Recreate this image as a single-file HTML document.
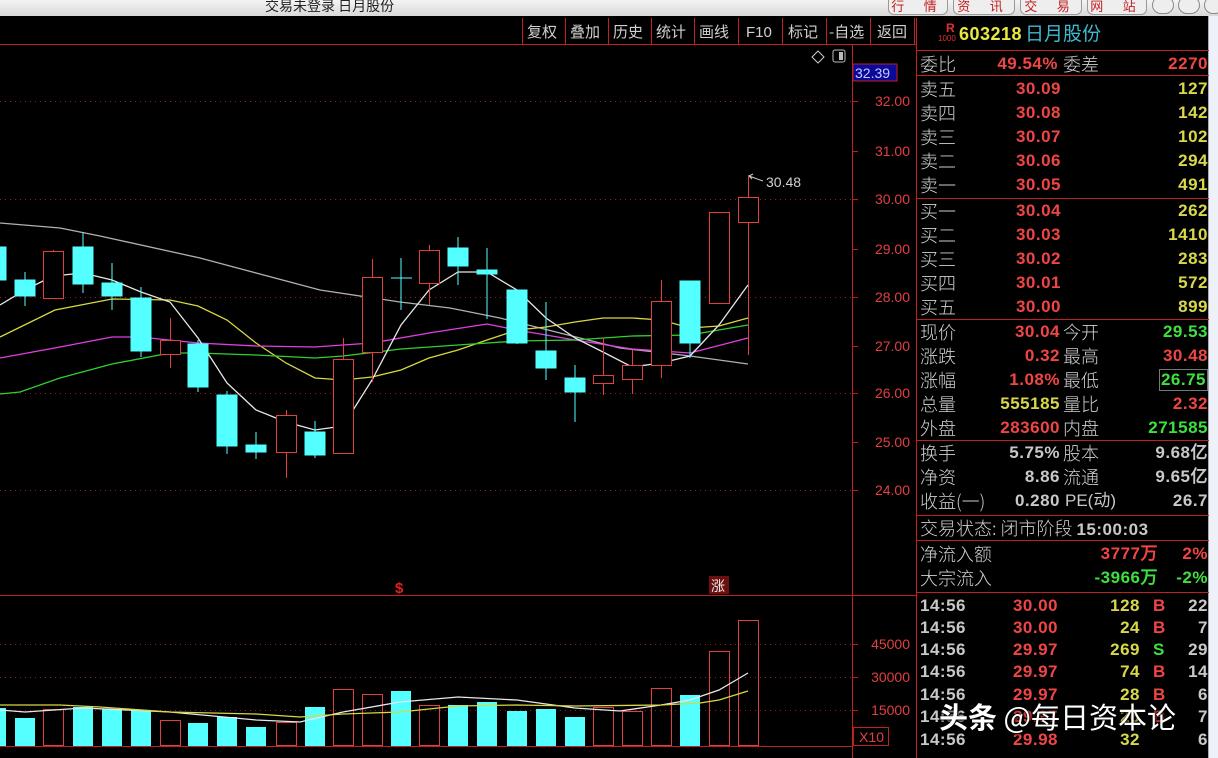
<!DOCTYPE html>
<html><head><meta charset="utf-8"><style>
*{margin:0;padding:0;box-sizing:border-box}
body{width:1218px;height:758px;background:#000;overflow:hidden;position:relative;font-family:"Liberation Sans","Noto Sans CJK SC",sans-serif}
.abs{position:absolute;white-space:nowrap}
#top{left:0;top:0;width:1218px;height:16px;background:linear-gradient(#f4f4f4,#d8d8d8);}
.tb{top:0;height:15px;border:1px solid #999;border-top:none;border-radius:0 0 6px 6px;background:#eee;color:#c02020;font-size:13px;line-height:13px;text-align:center;letter-spacing:8px}
#panel{left:916px;top:18px;width:292px;height:740px;border-left:1px solid #c02020;}
.r{position:absolute;height:24px;font-size:17px;line-height:24px;white-space:nowrap}
.lb{color:#d0d0d0;font-family:"Noto Sans CJK SC",sans-serif;font-weight:300;font-size:18px}
.n{font-family:"Liberation Sans",sans-serif;font-weight:bold;letter-spacing:0.5px}
.red{color:#f04545}.yel{color:#d8d84a}.grn{color:#3ee03e}.wh{color:#c8c8c8}
.hl{position:absolute;left:0;width:292px;height:1px;background:#c02020}
</style></head><body>
<div id="top" class="abs"></div>
<div class="abs" style="left:265px;top:-4px;font-size:14px;color:#222;font-family:'Noto Sans CJK SC',sans-serif">交易未登录 日月股份</div>
<div class="abs tb" style="left:888px;width:60px">行 情</div>
<div class="abs tb" style="left:953px;width:62px">资 讯</div>
<div class="abs tb" style="left:1020px;width:62px">交 易</div>
<div class="abs tb" style="left:1087px;width:60px">网 站</div>
<div class="abs" style="left:1152px;top:-4px;width:22px;height:18px;border:1px solid #888;border-radius:10px;background:#eee"></div>
<div class="abs" style="left:1178px;top:-4px;width:22px;height:18px;border:1px solid #888;border-radius:10px;background:#eee"></div>
<div class="abs" style="left:1204px;top:-4px;width:20px;height:18px;border:1px solid #888;border-radius:10px;background:#eee"></div>
<div class="abs" style="left:1208px;top:16px;width:10px;height:742px;background:#eef2f8;border-left:1px solid #aab"></div>

<svg class="abs" style="left:0;top:0" width="916" height="758" xmlns="http://www.w3.org/2000/svg" font-family="Liberation Sans, Noto Sans CJK SC, sans-serif">
<g stroke="#c02020" fill="none">
<line x1="0" y1="44.5" x2="916" y2="44.5"/>
<line x1="852.5" y1="44" x2="852.5" y2="758"/>
<line x1="0" y1="595.5" x2="916" y2="595.5"/>
<line x1="0" y1="746.5" x2="852" y2="746.5"/>
<g>
<line x1="522.5" y1="18" x2="522.5" y2="44"/><line x1="565.5" y1="18" x2="565.5" y2="44"/><line x1="608.5" y1="18" x2="608.5" y2="44"/><line x1="651.5" y1="18" x2="651.5" y2="44"/><line x1="694.5" y1="18" x2="694.5" y2="44"/><line x1="738.5" y1="18" x2="738.5" y2="44"/><line x1="782.5" y1="18" x2="782.5" y2="44"/><line x1="826.5" y1="18" x2="826.5" y2="44"/><line x1="870.5" y1="18" x2="870.5" y2="44"/><line x1="914.5" y1="18" x2="914.5" y2="44"/>
</g>
<g stroke="#902020" stroke-dasharray="1 4">
<line x1="0" y1="101.5" x2="852" y2="101.5"/><line x1="0" y1="199.5" x2="852" y2="199.5"/><line x1="0" y1="297.5" x2="852" y2="297.5"/><line x1="0" y1="393.5" x2="852" y2="393.5"/><line x1="0" y1="490.5" x2="852" y2="490.5"/>
<line x1="0" y1="644.5" x2="852" y2="644.5"/><line x1="0" y1="677.5" x2="852" y2="677.5"/><line x1="0" y1="710.5" x2="852" y2="710.5"/>
</g>
<g>
<line x1="852" y1="101.5" x2="858" y2="101.5"/><line x1="852" y1="151.5" x2="858" y2="151.5"/><line x1="852" y1="199.5" x2="858" y2="199.5"/><line x1="852" y1="249.5" x2="858" y2="249.5"/><line x1="852" y1="297.5" x2="858" y2="297.5"/><line x1="852" y1="346.5" x2="858" y2="346.5"/><line x1="852" y1="393.5" x2="858" y2="393.5"/><line x1="852" y1="442.5" x2="858" y2="442.5"/><line x1="852" y1="490.5" x2="858" y2="490.5"/>
<line x1="852" y1="644.5" x2="858" y2="644.5"/><line x1="852" y1="677.5" x2="858" y2="677.5"/><line x1="852" y1="710.5" x2="858" y2="710.5"/>
</g>
<rect x="853.5" y="727.5" width="35" height="18"/>
</g>
<g fill="#d0d0d0" font-size="15" font-family="Noto Sans CJK SC, sans-serif">
<text x="527" y="37">复权</text><text x="570" y="37">叠加</text><text x="613" y="37">历史</text><text x="656" y="37">统计</text><text x="699" y="37">画线</text><text x="746" y="37" font-family="Liberation Sans">F10</text><text x="788" y="37">标记</text><text x="829" y="37">-自选</text><text x="877" y="37">返回</text>
</g>
<rect x="853" y="64" width="44" height="17" fill="#0a0a9a" stroke="#c02020"/>
<text x="855" y="78" fill="#c8c8ff" font-size="14">32.39</text>
<g fill="#e04040" font-size="14" text-anchor="end">
<text x="910" y="106">32.00</text><text x="910" y="156">31.00</text><text x="910" y="204">30.00</text><text x="910" y="254">29.00</text><text x="910" y="302">28.00</text><text x="910" y="351">27.00</text><text x="910" y="398">26.00</text><text x="910" y="447">25.00</text><text x="910" y="495">24.00</text>
<text x="910" y="649">45000</text><text x="910" y="682">30000</text><text x="910" y="715">15000</text>
<text x="884" y="742">X10</text>
</g>
<path d="M818 51 l6 6 l-6 6 l-6 -6 z" stroke="#ccc" fill="none"/>
<rect x="833" y="50" width="12" height="12" rx="2" stroke="#bbb" fill="none"/><rect x="839" y="52" width="4" height="8" fill="#bbb"/>
<text x="395" y="593" fill="#e02020" font-size="15" font-weight="bold">$</text>
<rect x="709" y="576" width="20" height="18" fill="#6a1010"/>
<text x="711" y="591" fill="#eee" font-size="14" font-family="Noto Sans CJK SC, sans-serif">涨</text>
<text x="766" y="187" fill="#d0d0d0" font-size="14">30.48</text>
<path d="M749 176 l14 5 M749 176 l4 -2 M749 176 l3 3" stroke="#ccc" fill="none"/>

<g fill="none" stroke-width="1.3">
<polyline stroke="#b0b0b0" points="0,223 60,228 100,236 200,258 320,290 400,302 450,308 500,318 560,333 620,348 690,356 748,364"/>
<polyline stroke="#d8d840" points="0,337 55,310 112,299 170,300 198,306 227,320 256,343 286,363 315,378 343,380 372,377 401,370 429,358 458,350 487,340 517,330 546,327 575,322 603,318 632,318 661,320 690,328 719,326 748,318"/>
<polyline stroke="#e040e0" points="0,358 60,347 112,337 140,337 198,343 256,346 315,347 343,345 372,343 429,333 487,324 517,330 575,340 632,349 690,353 748,338"/>
<polyline stroke="#30d030" points="0,394 20,392 60,378 112,364 170,353 198,353 256,355 315,358 343,356 401,349 458,345 517,341 575,340 632,336 690,335 748,325"/>
<polyline stroke="#e8e8e8" points="0,305 25,290 53,276 83,273 112,280 141,292 170,302 198,338 227,383 256,410 286,422 315,430 343,426 372,380 401,325 429,290 458,272 487,272 517,290 546,318 575,338 603,352 632,367 661,363 690,356 719,325 748,285"/>
</g>
<g fill="#54ffff" stroke="#54ffff">
<rect x="-4" y="247" width="10" height="33"/>
<line x1="25" y1="272" x2="25" y2="306"/><rect x="15" y="280" width="20" height="16"/>
<line x1="83" y1="232" x2="83" y2="293"/><rect x="73" y="247" width="20" height="37"/>
<line x1="112" y1="263" x2="112" y2="310"/><rect x="102" y="283" width="20" height="13"/>
<line x1="141" y1="287" x2="141" y2="357"/><rect x="131" y="298" width="20" height="53"/>
<line x1="198" y1="340" x2="198" y2="392"/><rect x="188" y="344" width="20" height="43"/>
<line x1="227" y1="391" x2="227" y2="454"/><rect x="217" y="395" width="20" height="51"/>
<line x1="256" y1="432" x2="256" y2="459"/><rect x="246" y="445" width="20" height="7"/>
<line x1="315" y1="421" x2="315" y2="458"/><rect x="305" y="432" width="20" height="23"/>
<line x1="401" y1="258" x2="401" y2="310"/><line x1="391" y1="278" x2="412" y2="278"/>
<line x1="458" y1="237" x2="458" y2="285"/><rect x="448" y="248" width="20" height="18"/>
<line x1="487" y1="248" x2="487" y2="319"/><rect x="477" y="270" width="20" height="4"/>
<line x1="517" y1="290" x2="517" y2="344"/><rect x="507" y="290" width="20" height="53"/>
<line x1="546" y1="302" x2="546" y2="380"/><rect x="536" y="351" width="20" height="17"/>
<line x1="575" y1="365" x2="575" y2="422"/><rect x="565" y="378" width="20" height="14"/>
<line x1="690" y1="281" x2="690" y2="358"/><rect x="680" y="281" width="20" height="62"/>
</g>
<g fill="none" stroke="#e04040">
<line x1="53.5" y1="250" x2="53.5" y2="299"/><rect x="43.5" y="251.5" width="20" height="47" fill="#000"/>
<line x1="170.5" y1="318" x2="170.5" y2="368"/><rect x="160.5" y="340.5" width="20" height="14" fill="#000"/>
<line x1="286.5" y1="410" x2="286.5" y2="478"/><rect x="276.5" y="415.5" width="20" height="37" fill="#000"/>
<line x1="343.5" y1="338" x2="343.5" y2="453"/><rect x="333.5" y="359.5" width="20" height="94" fill="#000"/>
<line x1="372.5" y1="259" x2="372.5" y2="382"/><rect x="362.5" y="277.5" width="20" height="75" fill="#000"/>
<line x1="429.5" y1="245" x2="429.5" y2="305"/><rect x="419.5" y="250.5" width="20" height="33" fill="#000"/>
<line x1="603.5" y1="338" x2="603.5" y2="395"/><rect x="593.5" y="375.5" width="20" height="8" fill="#000"/>
<line x1="632.5" y1="350" x2="632.5" y2="394"/><rect x="622.5" y="365.5" width="20" height="14" fill="#000"/>
<line x1="661.5" y1="280" x2="661.5" y2="378"/><rect x="651.5" y="301.5" width="20" height="64" fill="#000"/>
<rect x="709.5" y="212.5" width="20" height="91" fill="#000"/>
<line x1="748.5" y1="175" x2="748.5" y2="355"/><rect x="738.5" y="197.5" width="20" height="25" fill="#000"/>
</g>
<g fill="#54ffff">
<rect x="-4" y="708" width="10" height="38"/><rect x="15" y="718" width="20" height="28"/><rect x="73" y="707" width="20" height="39"/><rect x="102" y="709" width="20" height="37"/><rect x="131" y="710" width="20" height="36"/><rect x="188" y="723" width="20" height="23"/><rect x="217" y="717" width="20" height="29"/><rect x="246" y="727" width="20" height="19"/><rect x="305" y="707" width="20" height="39"/><rect x="391" y="691" width="20" height="55"/><rect x="448" y="705" width="20" height="41"/><rect x="477" y="702" width="20" height="44"/><rect x="507" y="711" width="20" height="35"/><rect x="536" y="709" width="20" height="37"/><rect x="565" y="717" width="20" height="29"/><rect x="680" y="695" width="20" height="51"/>
</g>
<g fill="none" stroke="#e04040">
<rect x="43.5" y="709.5" width="20" height="36"/><rect x="160.5" y="720.5" width="20" height="25"/><rect x="276.5" y="722.5" width="20" height="23"/><rect x="333.5" y="689.5" width="20" height="56"/><rect x="362.5" y="694.5" width="20" height="51"/><rect x="419.5" y="705.5" width="20" height="40"/><rect x="593.5" y="707.5" width="20" height="38"/><rect x="622.5" y="711.5" width="20" height="34"/><rect x="651.5" y="688.5" width="20" height="57"/><rect x="709.5" y="651.5" width="20" height="94"/><rect x="738.5" y="620.5" width="20" height="125"/>
</g>
<g fill="none" stroke-width="1.3">
<polyline stroke="#e8e8e8" points="0,710 25,712 83,708 170,712 256,720 300,722 343,712 400,702 458,697 517,700 575,708 620,711 661,705 690,700 719,690 748,673"/>
<polyline stroke="#d8d840" points="0,705 60,705 100,707 170,712 256,714 300,717 343,714 400,712 458,706 517,705 575,706 661,705 700,703 719,700 748,691"/>
</g>
</svg>

<div id="panel" class="abs">
<div class="r" style="left:29px;top:4px;height:12px;font-size:12px;line-height:12px;color:#e03030;font-weight:bold">R</div>
<div class="r" style="left:21px;top:16px;height:10px;font-size:8px;line-height:10px;color:#e03030">1000</div>
<div class="r n yel" style="left:42px;top:4px;font-size:18px;color:#e8e840">603218</div>
<div class="r" style="left:108px;top:3px;font-size:19px;color:#40b8d0;font-family:'Noto Sans CJK SC',sans-serif">日月股份</div>
<div class="hl" style="top:32px"></div>
<div class="r lb" style="left:3px;top:34px">委比</div><div class="r n red" style="right:150px;top:34px">49.54%</div><div class="r lb" style="left:146px;top:34px">委差</div><div class="r n red" style="right:0;top:34px">2270</div>
<div class="hl" style="top:57px"></div>
<div class="r lb" style="left:3px;top:59px">卖五</div><div class="r n red" style="right:147px;top:59px">30.09</div><div class="r n yel" style="right:0;top:59px">127</div>
<div class="r lb" style="left:3px;top:83px">卖四</div><div class="r n red" style="right:147px;top:83px">30.08</div><div class="r n yel" style="right:0;top:83px">142</div>
<div class="r lb" style="left:3px;top:107px">卖三</div><div class="r n red" style="right:147px;top:107px">30.07</div><div class="r n yel" style="right:0;top:107px">102</div>
<div class="r lb" style="left:3px;top:131px">卖二</div><div class="r n red" style="right:147px;top:131px">30.06</div><div class="r n yel" style="right:0;top:131px">294</div>
<div class="r lb" style="left:3px;top:155px">卖一</div><div class="r n red" style="right:147px;top:155px">30.05</div><div class="r n yel" style="right:0;top:155px">491</div>
<div class="hl" style="top:180px"></div>
<div class="r lb" style="left:3px;top:181px">买一</div><div class="r n red" style="right:147px;top:181px">30.04</div><div class="r n yel" style="right:0;top:181px">262</div>
<div class="r lb" style="left:3px;top:205px">买二</div><div class="r n red" style="right:147px;top:205px">30.03</div><div class="r n yel" style="right:0;top:205px">1410</div>
<div class="r lb" style="left:3px;top:229px">买三</div><div class="r n red" style="right:147px;top:229px">30.02</div><div class="r n yel" style="right:0;top:229px">283</div>
<div class="r lb" style="left:3px;top:253px">买四</div><div class="r n red" style="right:147px;top:253px">30.01</div><div class="r n yel" style="right:0;top:253px">572</div>
<div class="r lb" style="left:3px;top:277px">买五</div><div class="r n red" style="right:147px;top:277px">30.00</div><div class="r n yel" style="right:0;top:277px">899</div>
<div class="hl" style="top:301px"></div>
<div class="r lb" style="left:3px;top:302px">现价</div><div class="r n red" style="right:148px;top:302px">30.04</div><div class="r lb" style="left:146px;top:302px">今开</div><div class="r n grn" style="right:0;top:302px">29.53</div>
<div class="r lb" style="left:3px;top:326px">涨跌</div><div class="r n red" style="right:148px;top:326px">0.32</div><div class="r lb" style="left:146px;top:326px">最高</div><div class="r n red" style="right:0;top:326px">30.48</div>
<div class="r lb" style="left:3px;top:350px">涨幅</div><div class="r n red" style="right:148px;top:350px">1.08%</div><div class="r lb" style="left:146px;top:350px">最低</div><div class="r n grn" style="right:0;top:351px;border:1px solid #777;height:22px;line-height:20px;padding:0 1px">26.75</div>
<div class="r lb" style="left:3px;top:374px">总量</div><div class="r n yel" style="right:148px;top:374px">555185</div><div class="r lb" style="left:146px;top:374px">量比</div><div class="r n red" style="right:0;top:374px">2.32</div>
<div class="r lb" style="left:3px;top:398px">外盘</div><div class="r n red" style="right:148px;top:398px">283600</div><div class="r lb" style="left:146px;top:398px">内盘</div><div class="r n grn" style="right:0;top:398px">271585</div>
<div class="hl" style="top:422px"></div>
<div class="r lb" style="left:3px;top:423px">换手</div><div class="r n wh" style="right:148px;top:423px">5.75%</div><div class="r lb" style="left:146px;top:423px">股本</div><div class="r n wh" style="right:0;top:423px">9.68亿</div>
<div class="r lb" style="left:3px;top:447px">净资</div><div class="r n wh" style="right:148px;top:447px">8.86</div><div class="r lb" style="left:146px;top:447px">流通</div><div class="r n wh" style="right:0;top:447px">9.65亿</div>
<div class="r lb" style="left:3px;top:471px">收益(一)</div><div class="r n wh" style="right:148px;top:471px">0.280</div><div class="r wh" style="left:148px;top:471px">PE(动)</div><div class="r n wh" style="right:0;top:471px">26.7</div>
<div class="hl" style="top:497px"></div>
<div class="r lb" style="left:3px;top:498px">交易状态: 闭市阶段 <span class="n wh" style="font-size:17px">15:00:03</span></div>
<div class="hl" style="top:522px"></div>
<div class="r lb" style="left:3px;top:524px">净流入额</div><div class="r n red" style="right:50px;top:524px">3777万</div><div class="r n red" style="right:0;top:524px">2%</div>
<div class="r lb" style="left:3px;top:548px">大宗流入</div><div class="r n grn" style="right:50px;top:548px">-3966万</div><div class="r n grn" style="right:0;top:548px">-2%</div>
<div class="hl" style="top:574px"></div>
<div class="r n wh" style="left:3px;top:577px;height:22px;line-height:22px">14:56</div><div class="r n red" style="right:150px;top:577px;line-height:22px">30.00</div><div class="r n yel" style="right:68px;top:577px;line-height:22px">128</div><div class="r n red" style="left:236px;top:577px;line-height:22px">B</div><div class="r n wh" style="right:0;top:577px;line-height:22px">22</div>
<div class="r n wh" style="left:3px;top:599px;line-height:22px">14:56</div><div class="r n red" style="right:150px;top:599px;line-height:22px">30.00</div><div class="r n yel" style="right:68px;top:599px;line-height:22px">24</div><div class="r n red" style="left:236px;top:599px;line-height:22px">B</div><div class="r n wh" style="right:0;top:599px;line-height:22px">7</div>
<div class="r n wh" style="left:3px;top:621px;line-height:22px">14:56</div><div class="r n red" style="right:150px;top:621px;line-height:22px">29.97</div><div class="r n yel" style="right:68px;top:621px;line-height:22px">269</div><div class="r n grn" style="left:236px;top:621px;line-height:22px">S</div><div class="r n wh" style="right:0;top:621px;line-height:22px">29</div>
<div class="r n wh" style="left:3px;top:643px;line-height:22px">14:56</div><div class="r n red" style="right:150px;top:643px;line-height:22px">29.97</div><div class="r n yel" style="right:68px;top:643px;line-height:22px">74</div><div class="r n red" style="left:236px;top:643px;line-height:22px">B</div><div class="r n wh" style="right:0;top:643px;line-height:22px">14</div>
<div class="r n wh" style="left:3px;top:666px;line-height:22px">14:56</div><div class="r n red" style="right:150px;top:666px;line-height:22px">29.97</div><div class="r n yel" style="right:68px;top:666px;line-height:22px">28</div><div class="r n red" style="left:236px;top:666px;line-height:22px">B</div><div class="r n wh" style="right:0;top:666px;line-height:22px">6</div>
<div class="r n wh" style="left:3px;top:688px;line-height:22px">14:56</div><div class="r n red" style="right:150px;top:688px;line-height:22px">29.97</div><div class="r n yel" style="right:68px;top:688px;line-height:22px">26</div><div class="r n red" style="left:236px;top:688px;line-height:22px">B</div><div class="r n wh" style="right:0;top:688px;line-height:22px">7</div>
<div class="r n wh" style="left:3px;top:711px;line-height:22px">14:56</div><div class="r n red" style="right:150px;top:711px;line-height:22px">29.98</div><div class="r n yel" style="right:68px;top:711px;line-height:22px">32</div><div class="r n wh" style="right:0;top:711px;line-height:22px">6</div>
<div class="r" style="left:22px;top:680px;height:36px;font-size:29px;line-height:36px;color:#fff;font-family:'Noto Sans CJK SC',sans-serif;text-shadow:0 0 3px #000,1px 1px 2px #000"><b>头条</b> @每日资本论</div>
</div>
</body></html>
